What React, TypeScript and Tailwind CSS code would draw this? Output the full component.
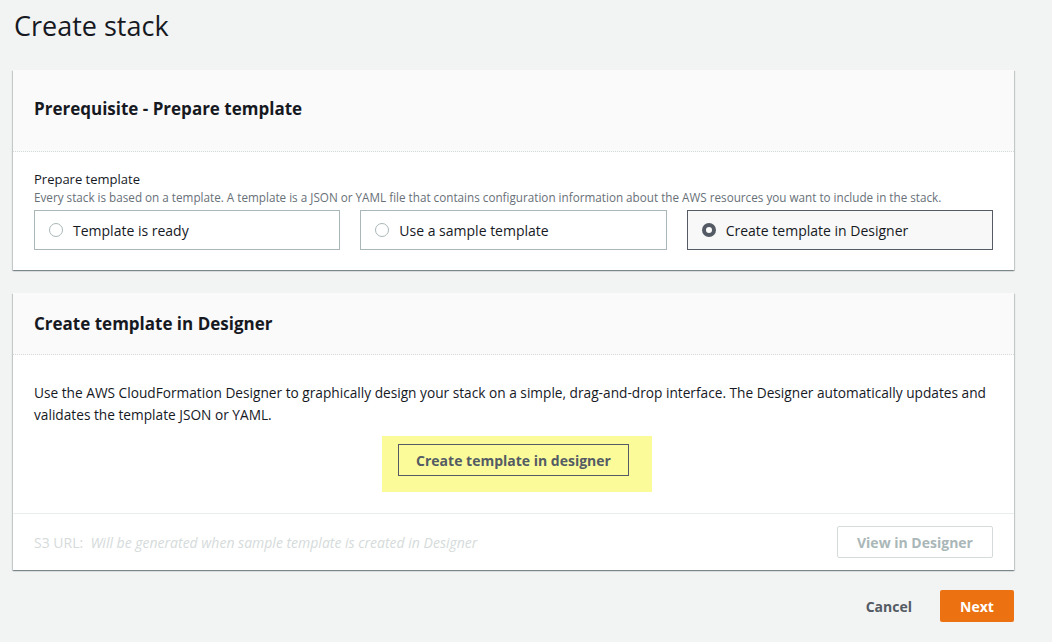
import React from 'react'

function RadioTile({ label, selected }: { label: string; selected?: boolean }) {
  return (
    <div
      className={`flex items-center gap-[10px] h-[40px] px-[14px] border ${
        selected ? 'border-[#545b64] bg-[#f8f8f8]' : 'border-[#aab7b8] bg-white'
      }`}
    >
      {selected ? (
        <span className="w-[14px] h-[14px] rounded-full bg-[#545b64] flex items-center justify-center">
          <span className="w-[6px] h-[6px] rounded-full bg-white" />
        </span>
      ) : (
        <span className="w-[14px] h-[14px] rounded-full border border-[#aab7b8] bg-white" />
      )}
      <span className="text-[14px] text-[#16191f]">{label}</span>
    </div>
  )
}

export default function App() {
  return (
    <div
      className="min-h-[642px] bg-[#f2f3f3] text-[#16191f] pb-[20px]"
      style={{ fontFamily: '"Open Sans", "Liberation Sans", Arial, sans-serif' }}
    >
      <div className="w-[1001px] ml-[13px]">
        <h1 className="text-[27px] leading-[52px] font-normal text-[#16191f] pl-[1px]">Create stack</h1>

        {/* Prerequisite card */}
        <div className="mt-[18px] bg-white shadow-[0_1px_1px_0_rgba(0,28,36,0.3),1px_1px_1px_0_rgba(0,28,36,0.15),-1px_1px_1px_0_rgba(0,28,36,0.15)]">
          <div className="h-[82px] flex items-center px-[21px] bg-[#fafafa] border-b border-dotted border-[#d5dbdb]">
            <h2 className="text-[17px] font-bold text-[#16191f] -mt-[3px]">Prerequisite - Prepare template</h2>
          </div>
          <div className="px-[21px] pt-[19px] pb-[20px]">
            <p className="text-[13px] leading-[17px] text-[#16191f]">Prepare template</p>
            <p className="text-[11.7px] leading-[18px] text-[#687078]">
              Every stack is based on a template. A template is a JSON or YAML file that contains configuration information about the AWS resources you want to include in the stack.
            </p>
            <div className="grid grid-cols-3 gap-[20px] mt-[4px]">
              <RadioTile label="Template is ready" />
              <RadioTile label="Use a sample template" />
              <RadioTile label="Create template in Designer" selected />
            </div>
          </div>
        </div>

        {/* Designer card */}
        <div className="mt-[23px] bg-white shadow-[0_1px_1px_0_rgba(0,28,36,0.3),1px_1px_1px_0_rgba(0,28,36,0.15),-1px_1px_1px_0_rgba(0,28,36,0.15)]">
          <div className="h-[62px] flex items-center px-[21px] bg-[#fafafa] border-b border-dotted border-[#d5dbdb]">
            <h2 className="text-[17px] font-bold text-[#16191f]">Create template in Designer</h2>
          </div>
          <div className="px-[21px] pt-[27px] pb-[21px]">
            <p className="text-[13.7px] leading-[22px] text-[#16191f]">
              Use the AWS CloudFormation Designer to graphically design your stack on a simple, drag-and-drop interface. The Designer automatically updates and validates the template JSON or YAML.
            </p>
            <div className="flex mt-[10px]">
              <div className="bg-[#fbfb9a] pl-[16px] pr-[23px] pt-[8px] pb-[16px] ml-[348px]">
                <button className="h-[32px] w-[231px] border border-[#545b64] text-[14px] font-bold text-[#545b64]">
                  Create template in designer
                </button>
              </div>
            </div>
          </div>
          <div className="border-t border-[#eaeded] h-[57px] flex items-center justify-between px-[21px]">
            <p className="text-[14px] text-[#d5dbdb]">
              S3 URL:&nbsp;&nbsp;<span className="italic">Will be generated when sample template is created in Designer</span>
            </p>
            <button className="h-[32px] w-[156px] border border-[#d5dbdb] rounded-[2px] text-[14px] font-bold text-[#aab7b8]">
              View in Designer
            </button>
          </div>
        </div>

        {/* Actions */}
        <div className="flex justify-end items-center gap-[22px] mt-[20px]">
          <button className="text-[14px] font-bold text-[#545b64] px-[6px]">Cancel</button>
          <button className="h-[32px] w-[74px] bg-[#ec7211] rounded-[2px] text-[14px] font-bold text-white">Next</button>
        </div>
      </div>
    </div>
  )
}
